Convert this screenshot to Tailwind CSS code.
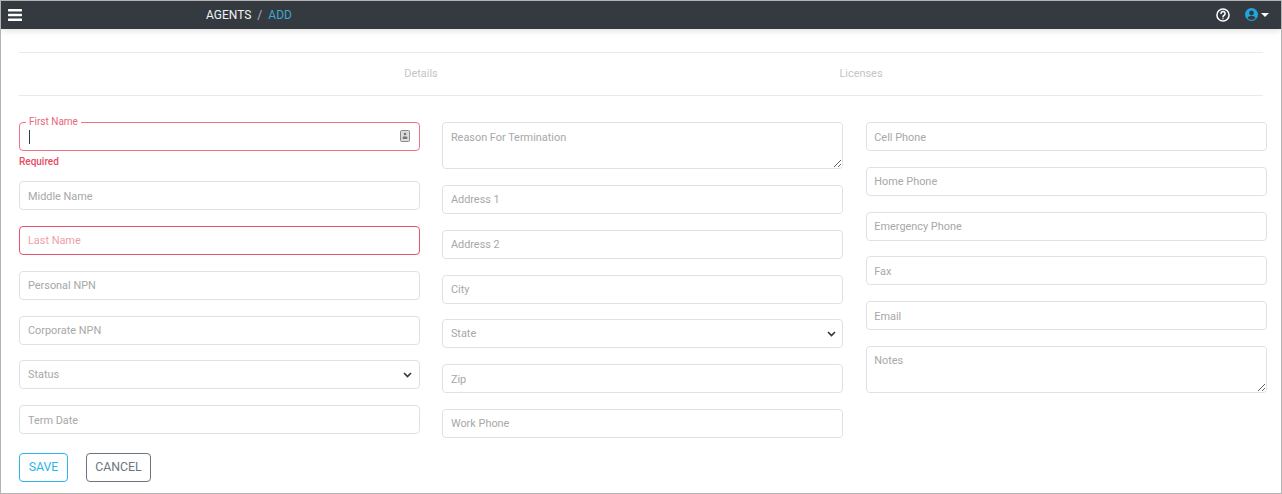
<!DOCTYPE html>
<html>
<head>
<meta charset="utf-8">
<script src="https://cdn.jsdelivr.net/npm/@tailwindcss/browser@4"></script>
</head>
<body class="bg-white">
<div class="w-[1282px] h-[494px] overflow-hidden border border-[#b4b4b4] font-['Roboto',sans-serif] text-[10.9px] text-[#495057] flex flex-col">
  <header class="h-[28px] shrink-0 bg-[#343a40] flex items-center relative shadow-[0_2px_6px_rgba(0,0,0,0.12)]">
    <svg class="ml-[7px] w-[14px] h-[12px]" viewBox="0 0 14 12" fill="#fff"><rect width="14" height="2.4" y="0" rx="0.6"/><rect width="14" height="2.4" y="4.8" rx="0.6"/><rect width="14" height="2.4" y="9.6" rx="0.6"/></svg>
    <div class="ml-[184px] flex items-center text-[12px] leading-none">
      <span class="text-[#f1f3f5]">AGENTS</span>
      <span class="text-[#adb5bd] mx-[6px]">/</span>
      <span class="text-[#3ea6cf]">ADD</span>
    </div>
    <div class="ml-auto -mt-[1px] flex items-center">
      <svg class="w-[14px] h-[14px]" viewBox="0 0 24 24" fill="none" stroke="#fff" stroke-width="2.6"><circle cx="12" cy="12" r="10.4"/><path d="M8.6 9.4a3.5 3.5 0 1 1 5.4 3c-1.3.8-2 1.4-2 2.8" stroke-linecap="round"/><circle cx="12" cy="18.3" r="1.2" fill="#fff" stroke="none"/></svg>
      <svg class="ml-[15px] w-[13px] h-[13px]" viewBox="0 0 24 24"><circle cx="12" cy="12" r="12" fill="#1fa8e0"/><circle cx="12" cy="9.2" r="4.4" fill="#343a40"/><path d="M4.6 19c1.4-3.2 4-4.6 7.4-4.6s6 1.4 7.4 4.6A10.6 10.6 0 0 1 12 22a10.6 10.6 0 0 1-7.4-3z" fill="#343a40"/></svg>
      <span class="ml-[3px] mr-[12px] w-0 h-0 border-x-[4px] border-x-transparent border-t-[4px] border-t-white"></span>
    </div>
  </header>

  <main class="flex-1 px-[18px] pt-[23px]">
    <div class="h-[42px] border-y border-[#e9e9ef] flex justify-center items-center text-center text-[#c4c4c4] box-content -mb-[1px]">
      <span class="w-[441px]">Details</span>
      <span class="w-[441px] -ml-[1px]">Licenses</span>
    </div>
    <form class="mt-[27px] grid grid-cols-[401px_401px_401px] gap-x-[22.4px] items-start">
      <div class="flex flex-col">
        <div class="relative h-[29px] mb-[3px]">
          <input class="w-full h-full rounded-[4px] border border-[#ec7385] bg-white px-[9px] outline-none">
          <span class="absolute left-[7px] -top-[6px] bg-white px-[3px] text-[10px] leading-[12px] text-[#e9657a]">First Name</span>
          <span class="absolute left-[10px] top-[8px] w-[1px] h-[14px] bg-[#343a40]"></span>
          <svg class="absolute right-[10px] top-[8px] w-[10px] h-[12px]" viewBox="0 0 10 12"><rect x="0.5" y="0.5" width="9" height="11" rx="1.2" fill="#dcdcdc" stroke="#8a8a8a"/><circle cx="5" cy="4" r="1.3" fill="#777"/><rect x="2.7" y="6.4" width="4.6" height="2.6" rx="0.6" fill="#777"/></svg>
        </div>
        <span class="h-[15px] mb-[12.2px] text-[10px] leading-[15px] font-medium text-[#e74c63]">Required</span>
        <input placeholder="Middle Name" class="h-[29px] mb-[15.8px] rounded-[4px] border border-[#dee2e6] px-[8px] pt-[1px] outline-none placeholder:text-[#a8a8a8]">
        <input placeholder="Last Name" class="h-[29px] mb-[15.8px] rounded-[4px] border border-[#e5566c] px-[8px] outline-none placeholder:text-[#eda0ac]">
        <input placeholder="Personal NPN" class="h-[29px] mb-[15.8px] rounded-[4px] border border-[#dee2e6] px-[8px] outline-none placeholder:text-[#a8a8a8]">
        <input placeholder="Corporate NPN" class="h-[29px] mb-[15.8px] rounded-[4px] border border-[#dee2e6] px-[8px] outline-none placeholder:text-[#a8a8a8]">
        <div class="h-[29px] mb-[15.8px] rounded-[4px] border border-[#dee2e6] px-[8px] flex items-center justify-between text-[#a8a8a8]">
          <span class="pt-[1px]">Status</span>
          <svg class="w-[9px] h-[6px] mr-[-1px]" viewBox="0 0 9 6" fill="none" stroke="#343a40" stroke-width="1.7"><path d="M1 1l3.5 3.5L8 1"/></svg>
        </div>
        <input placeholder="Term Date" class="h-[29px] rounded-[4px] border border-[#dee2e6] px-[8px] pt-[1px] outline-none placeholder:text-[#a8a8a8]">
        <div class="mt-[19px] flex gap-[18px] text-[12.3px]">
          <button type="button" class="h-[29px] w-[49px] rounded-[4px] border border-[#2bb5ee] text-[#2bb5ee]">SAVE</button>
          <button type="button" class="h-[29px] w-[65px] rounded-[4px] border border-[#6c757d] text-[#6c757d]">CANCEL</button>
        </div>
      </div>
      <div class="flex flex-col">
        <textarea placeholder="Reason For Termination" class="h-[47px] mb-[16px] rounded-[4px] border border-[#dee2e6] px-[7.5px] pt-[7px] pb-[5px] outline-none placeholder:text-[#a8a8a8]"></textarea>
        <input placeholder="Address 1" class="h-[29px] mb-[15.8px] rounded-[4px] border border-[#dee2e6] px-[7.5px] outline-none placeholder:text-[#a8a8a8]">
        <input placeholder="Address 2" class="h-[29px] mb-[15.8px] rounded-[4px] border border-[#dee2e6] px-[7.5px] outline-none placeholder:text-[#a8a8a8]">
        <input placeholder="City" class="h-[29px] mb-[15.8px] rounded-[4px] border border-[#dee2e6] px-[7.5px] outline-none placeholder:text-[#a8a8a8]">
        <div class="h-[29px] mb-[15.8px] rounded-[4px] border border-[#dee2e6] px-[7.5px] flex items-center justify-between text-[#a8a8a8]">
          <span>State</span>
          <svg class="w-[9px] h-[6px] mr-[-1px]" viewBox="0 0 9 6" fill="none" stroke="#343a40" stroke-width="1.7"><path d="M1 1l3.5 3.5L8 1"/></svg>
        </div>
        <input placeholder="Zip" class="h-[29px] mb-[15.8px] rounded-[4px] border border-[#dee2e6] px-[7.5px] pt-[1px] outline-none placeholder:text-[#a8a8a8]">
        <input placeholder="Work Phone" class="h-[29px] rounded-[4px] border border-[#dee2e6] px-[7.5px] outline-none placeholder:text-[#a8a8a8]">
      </div>
      <div class="flex flex-col">
        <input placeholder="Cell Phone" class="h-[29px] mb-[15.8px] rounded-[4px] border border-[#dee2e6] px-[7.5px] pt-[1px] outline-none placeholder:text-[#a8a8a8]">
        <input placeholder="Home Phone" class="h-[29px] mb-[15.8px] rounded-[4px] border border-[#dee2e6] px-[7.5px] pt-[1px] outline-none placeholder:text-[#a8a8a8]">
        <input placeholder="Emergency Phone" class="h-[29px] mb-[15.8px] rounded-[4px] border border-[#dee2e6] px-[7.5px] outline-none placeholder:text-[#a8a8a8]">
        <input placeholder="Fax" class="h-[29px] mb-[15.8px] rounded-[4px] border border-[#dee2e6] px-[7.5px] pt-[1px] outline-none placeholder:text-[#a8a8a8]">
        <input placeholder="Email" class="h-[29px] mb-[15.8px] rounded-[4px] border border-[#dee2e6] px-[7.5px] pt-[1px] outline-none placeholder:text-[#a8a8a8]">
        <textarea placeholder="Notes" class="h-[47px] rounded-[4px] border border-[#dee2e6] px-[7.5px] py-[6px] outline-none placeholder:text-[#a8a8a8]"></textarea>
      </div>
    </form>
  </main>
</div>
</body>
</html>
